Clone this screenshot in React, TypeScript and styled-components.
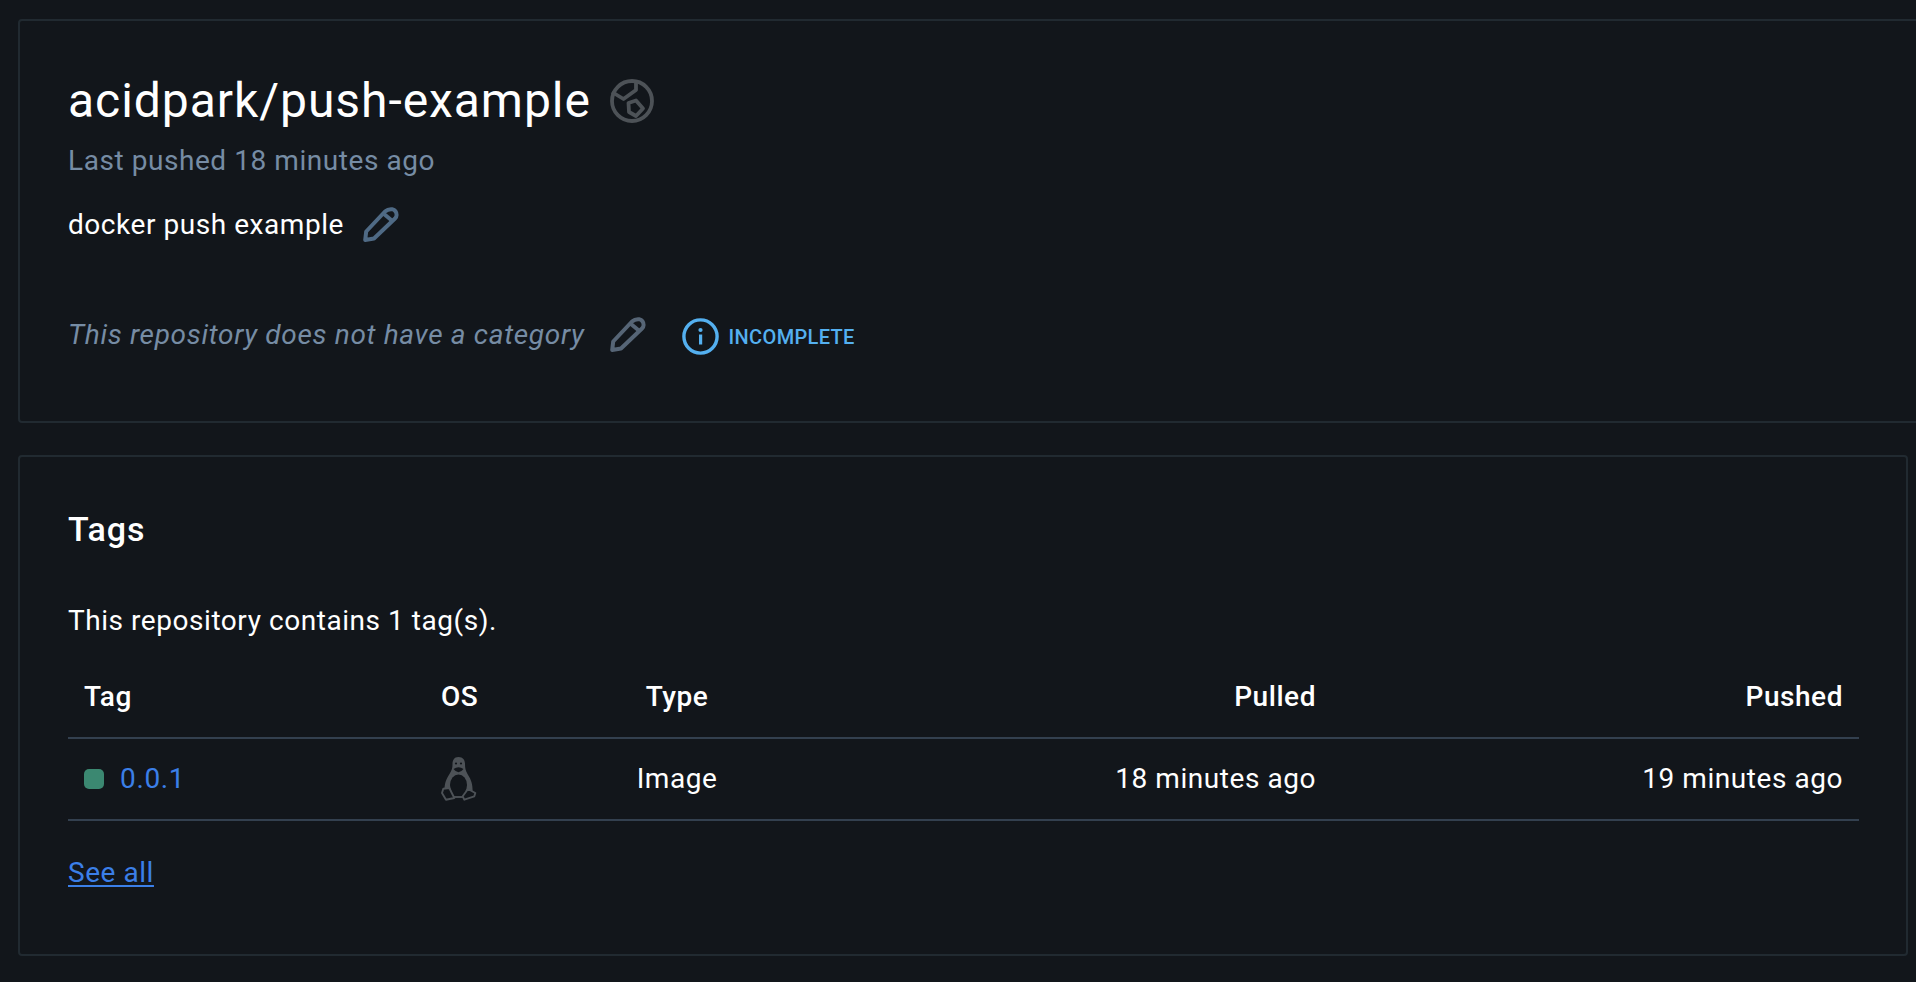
import React from "react";
import styled, { createGlobalStyle } from "styled-components";

const Global = createGlobalStyle`
  html, body { margin: 0; padding: 0; background: #12161b; overflow: hidden; }
  body { font-family: Roboto, "Liberation Sans", sans-serif; color: #fff; }
`;

const Page = styled.main`
  width: 1916px;
  height: 982px;
  box-sizing: border-box;
  padding: 19px 8px 0 18px;
  display: flex;
  flex-direction: column;
  gap: 32px;
  overflow: hidden;
`;

const Card = styled.section<{ $bleed?: boolean; $height: number }>`
  box-sizing: border-box;
  height: ${(p) => p.$height}px;
  margin-right: ${(p) => (p.$bleed ? "-40px" : "0")};
  border: 2px solid #212a31;
  border-radius: 4px;
  padding: 0 47px 0 48px;
`;

const TitleRow = styled.div`
  display: flex;
  align-items: center;
  gap: 19px;
  margin-top: 50px;
  height: 60px;
`;

const Title = styled.h1`
  margin: 0;
  font-size: 48px;
  line-height: 60px;
  font-weight: 400;
  letter-spacing: 0.95px;
`;

const Muted = styled.div`
  margin-top: 12px;
  font-size: 28px;
  line-height: 36px;
  letter-spacing: 0.56px;
  color: #768ca4;
`;

const EditRow = styled.div`
  display: flex;
  align-items: center;
  height: 38px;
  margin-top: 27px;
`;

const Description = styled.span`
  font-size: 28px;
  line-height: 36px;
  letter-spacing: 0.55px;
`;

const EmptyCategory = styled(Description)`
  font-style: italic;
  letter-spacing: 0.67px;
  color: #768ca4;
`;

const PencilSlot = styled.span<{ $gap: number; $color: string }>`
  display: inline-flex;
  margin-left: ${(p) => p.$gap}px;
  color: ${(p) => p.$color};
`;

const CategoryRow = styled(EditRow)`
  margin-top: 72px;
`;

const Badge = styled.span`
  display: inline-flex;
  align-items: center;
  gap: 10px;
  margin-left: 36px;
  margin-top: 3px;
  color: #54b0f0;
  font-size: 20px;
  font-weight: 500;
  letter-spacing: 0.35px;
`;

const Heading = styled.h2`
  margin: 50px 0 0;
  font-size: 34px;
  line-height: 44px;
  font-weight: 500;
  letter-spacing: 1px;
`;

const Summary = styled.p`
  margin: 52px 0 0;
  font-size: 28px;
  line-height: 36px;
  letter-spacing: 0.55px;
`;

const TableGrid = styled.div`
  display: grid;
  grid-template-columns: 357px 196px 112px 599px 527px;
  margin-top: 18px;
`;

const Cell = styled.div<{ $align?: string; $head?: boolean }>`
  box-sizing: border-box;
  display: flex;
  align-items: center;
  justify-content: ${(p) => p.$align || "flex-start"};
  height: 82px;
  padding: 0 16px 2px;
  border-bottom: 2px solid #33404f;
  font-size: 28px;
  letter-spacing: 0.55px;
  font-weight: ${(p) => (p.$head ? 500 : 400)};
`;

const Status = styled.span`
  width: 20px;
  height: 20px;
  margin-top: 2px;
  border-radius: 5px;
  background: #3b8871;
  margin-right: 16px;
`;

const TagLink = styled.a`
  color: #3b7fe8;
  letter-spacing: 0.65px;
`;

const TuxSlot = styled.span`
  display: inline-flex;
  margin-top: 2px;
`;

const SeeAll = styled.a`
  display: inline-block;
  margin-top: 34px;
  font-size: 28px;
  line-height: 36px;
  letter-spacing: 0.55px;
  color: #3b7fe8;
  text-decoration: underline;
  text-underline-offset: 3px;
`;

const Pencil = () => (
  <svg width="36" height="36" viewBox="0 0 36 36" fill="none" stroke="currentColor" strokeWidth="4" strokeLinejoin="round">
    <path d="M2.2 33 L3.2 24.5 L22 4.5 Q25 1.8 29 2.2 Q33.6 3.5 33.6 8 Q33.6 10 32 11.5 L11 31.5 Z" />
    <path d="M21 7 L30 14.5" />
  </svg>
);

const Globe = () => (
  <svg width="44" height="44" viewBox="0 0 44 44" fill="none" stroke="#4d5257" strokeWidth="3.8" strokeLinejoin="round">
    <circle cx="22" cy="22" r="20" />
    <path d="M26 3 L26 11 L13.5 20 L2 13" />
    <path d="M18.5 24 L26 21.5 L33 29.5 L26 37 L19 33 Z" />
  </svg>
);

const Info = () => (
  <svg width="37" height="37" viewBox="0 0 37 37" fill="none">
    <circle cx="18.5" cy="18.5" r="16.6" stroke="#54b0f0" strokeWidth="3.4" />
    <circle cx="18.5" cy="12" r="2.1" fill="#54b0f0" />
    <rect x="17" y="16.5" width="3.2" height="10" fill="#54b0f0" />
  </svg>
);

const Tux = () => (
  <svg width="36" height="44" viewBox="0 0 36 44" fill="none">
    <path d="M17.5 0 C13 0 11.5 3.5 11.5 7 C11.5 11 11 13 8.5 17 C5.5 21.5 3.5 26 3.5 33 L31.5 34 C32 26 29 21 26.5 17 C24.5 13.5 24 11 24 7 C24 3 22 0 17.5 0 Z" fill="#4d5257" />
    <ellipse cx="17.5" cy="28" rx="8.5" ry="10.5" fill="#12161b" />
    <path d="M12.5 12 Q17.5 8.5 22.5 12 Q17.5 18.5 12.5 12 Z" fill="#12161b" />
    <circle cx="15" cy="6.5" r="1.1" fill="#12161b" />
    <circle cx="20" cy="6.5" r="1.1" fill="#12161b" />
    <path d="M2.3 31.7 L8.3 31 L13.3 41 L5 42.7 L1 36 Z M27 32 L34.3 36 L33.3 39.3 L23.3 42.7 L21.7 39.3 Z" fill="#12161b" stroke="#4d5257" strokeWidth="1.9" strokeLinejoin="round" />
    <path d="M13 40 L22 40" stroke="#4d5257" strokeWidth="1.9" />
  </svg>
);

export default function App() {
  return (
    <>
      <Global />
      <Page>
        <Card $bleed $height={404}>
          <TitleRow>
            <Title>acidpark/push-example</Title>
            <Globe />
          </TitleRow>
          <Muted>Last pushed 18 minutes ago</Muted>
          <EditRow>
            <Description>docker push example</Description>
            <PencilSlot $gap={19} $color="#4f6a85"><Pencil /></PencilSlot>
          </EditRow>
          <CategoryRow>
            <EmptyCategory>This repository does not have a category</EmptyCategory>
            <PencilSlot $gap={25} $color="#566576"><Pencil /></PencilSlot>
            <Badge><Info />INCOMPLETE</Badge>
          </CategoryRow>
        </Card>
        <Card $height={501}>
          <Heading>Tags</Heading>
          <Summary>This repository contains 1 tag(s).</Summary>
          <TableGrid>
            <Cell $head>Tag</Cell>
            <Cell $head>OS</Cell>
            <Cell $head $align="center">Type</Cell>
            <Cell $head $align="flex-end">Pulled</Cell>
            <Cell $head $align="flex-end">Pushed</Cell>
            <Cell><Status /><TagLink>0.0.1</TagLink></Cell>
            <Cell><TuxSlot><Tux /></TuxSlot></Cell>
            <Cell $align="center">Image</Cell>
            <Cell $align="flex-end">18 minutes ago</Cell>
            <Cell $align="flex-end">19 minutes ago</Cell>
          </TableGrid>
          <SeeAll>See all</SeeAll>
        </Card>
      </Page>
    </>
  );
}
